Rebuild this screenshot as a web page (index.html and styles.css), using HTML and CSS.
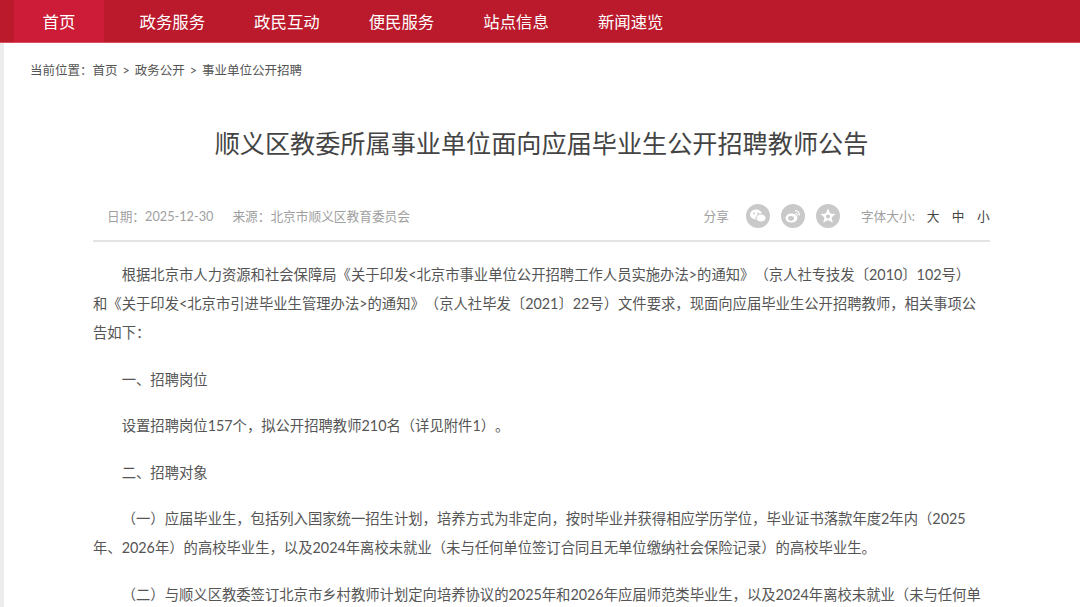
FILE: index.html
```html
<!DOCTYPE html>
<html lang="zh">
<head>
    <meta charset="UTF-8">
    <title>顺义区教委所属事业单位面向应届毕业生公开招聘教师公告</title>
    <link rel="stylesheet" href="styles.css">
</head>
<body>
    <div class="nav">
        <a class="nav-item active">首页</a>
        <a class="nav-item">政务服务</a>
        <a class="nav-item">政民互动</a>
        <a class="nav-item">便民服务</a>
        <a class="nav-item">站点信息</a>
        <a class="nav-item">新闻速览</a>
    </div>

    <div class="page">
        <div class="crumbs">
            <span>当前位置：</span>
            <span>首页</span>
            <span>&gt;</span>
            <span>政务公开</span>
            <span>&gt;</span>
            <span>事业单位公开招聘</span>
        </div>

        <div class="article">
            <h1>顺义区教委所属事业单位面向应届毕业生公开招聘教师公告</h1>

            <div class="meta">
                <div class="meta-left">
                    <span>日期：2025-12-30</span>
                    <span>来源：北京市顺义区教育委员会</span>
                </div>
                <div class="meta-right">
                    <span class="share-label">分享</span>
                    <span class="share-icon">
                        <svg viewBox="0 0 24 24" width="24" height="24"><circle cx="12" cy="12" r="12" fill="#c9c9c9"/><ellipse cx="10" cy="10.5" rx="6" ry="5" fill="#fff"/><ellipse cx="15" cy="14" rx="5" ry="4" fill="#fff" stroke="#c9c9c9"/><circle cx="8" cy="9.5" r=".9" fill="#c9c9c9"/><circle cx="12" cy="9.5" r=".9" fill="#c9c9c9"/></svg>
                    </span>
                    <span class="share-icon">
                        <svg viewBox="0 0 24 24" width="24" height="24"><circle cx="12" cy="12" r="12" fill="#c9c9c9"/><ellipse cx="10.5" cy="14" rx="6" ry="4.5" fill="#fff"/><ellipse cx="10" cy="14.3" rx="3" ry="2.4" fill="#c9c9c9"/><path d="M14 7a4 4 0 0 1 4.5 4.5M14.5 9.5a2 2 0 0 1 2 2" fill="none" stroke="#fff" stroke-width="1.2"/></svg>
                    </span>
                    <span class="share-icon">
                        <svg viewBox="0 0 24 24" width="24" height="24"><circle cx="12" cy="12" r="12" fill="#c9c9c9"/><path d="M12 4.5l2.300 5 5.200.6-3.900 3.500 1.100 5.200-4.700-2.700-4.700 2.700 1.100-5.200-3.900-3.500 5.200-.6z" fill="#fff"/><circle cx="12" cy="12.5" r="2" fill="#c9c9c9"/></svg>
                    </span>
                    <span class="font-label">字体大小:</span>
                    <span class="font-size">大</span>
                    <span class="font-size">中</span>
                    <span class="font-size">小</span>
                </div>
            </div>

            <div class="content">
                <p>根据北京市人力资源和社会保障局《关于印发&lt;北京市事业单位公开招聘工作人员实施办法&gt;的通知》（京人社专技发〔2010〕102号）和《关于印发&lt;北京市引进毕业生管理办法&gt;的通知》（京人社毕发〔2021〕22号）文件要求，现面向应届毕业生公开招聘教师，相关事项公告如下：</p>
                <p>一、招聘岗位</p>
                <p>设置招聘岗位157个，拟公开招聘教师210名（详见附件1）。</p>
                <p>二、招聘对象</p>
                <p>（一）应届毕业生，包括列入国家统一招生计划，培养方式为非定向，按时毕业并获得相应学历学位，毕业证书落款年度2年内（2025年、2026年）的高校毕业生，以及2024年离校未就业（未与任何单位签订合同且无单位缴纳社会保险记录）的高校毕业生。</p>
                <p>（二）与顺义区教委签订北京市乡村教师计划定向培养协议的2025年和2026年应届师范类毕业生，以及2024年离校未就业（未与任何单</p>
            </div>
        </div>
    </div>
</body>
</html>
```

FILE: styles.css
```css
html, body {
    height: 607px;
    overflow: hidden;
}

body {
    margin: 0;
    background-color: #fff;
    font-family: "Lato", "Noto Sans CJK SC", sans-serif;
    color: #555;
    text-spacing-trim: space-all;
}

.nav {
    display: flex;
    height: 42px;
    padding-left: 14px;
    background-color: #bb1a2c;
    border-bottom: 1px solid #d9505d;
}

.nav-item {
    width: 114.6px;
    line-height: 44px;
    text-align: center;
    font-size: 16.4px;
    color: #fff;
}

.nav-item.active {
    width: 90px;
    margin-right: 11px;
    background-color: #cc1c37;
}

.page {
    height: 564px;
    border-left: 4px solid #ececec;
}

.crumbs {
    display: flex;
    gap: 5px;
    padding: 20px 0 0 26px;
    font-size: 12.5px;
    line-height: 16px;
}

.crumbs span:first-child {
    margin-right: -5px;
}

.article {
    width: 897px;
    margin-left: 89px;
}

h1 {
    margin: 46px 0 0;
    text-align: center;
    font-size: 25.15px;
    font-weight: normal;
    line-height: 36px;
    color: #444;
}

.meta {
    display: flex;
    justify-content: space-between;
    align-items: center;
    height: 49px;
    margin-top: 30px;
    border-bottom: 2px solid #e4e4e4;
    font-size: 12.7px;
    color: #a0a0a0;
}

.meta-left {
    display: flex;
    gap: 19px;
    padding-left: 14px;
}

.meta-right {
    display: flex;
    align-items: center;
}

.share-label {
    margin-right: 17px;
}

.share-icon {
    display: flex;
    margin-right: 11px;
}

.font-label {
    width: 53.5px;
    margin-left: 10px;
    white-space: nowrap;
}

.font-size {
    width: 13px;
    margin-left: 12.2px;
    color: #444;
}

.content {
    padding: 18px 7px 0 0;
    font-size: 14.33px;
    line-height: 29px;
}

.content p {
    margin: 0 0 17.5px;
    text-indent: 2em;
}
```
